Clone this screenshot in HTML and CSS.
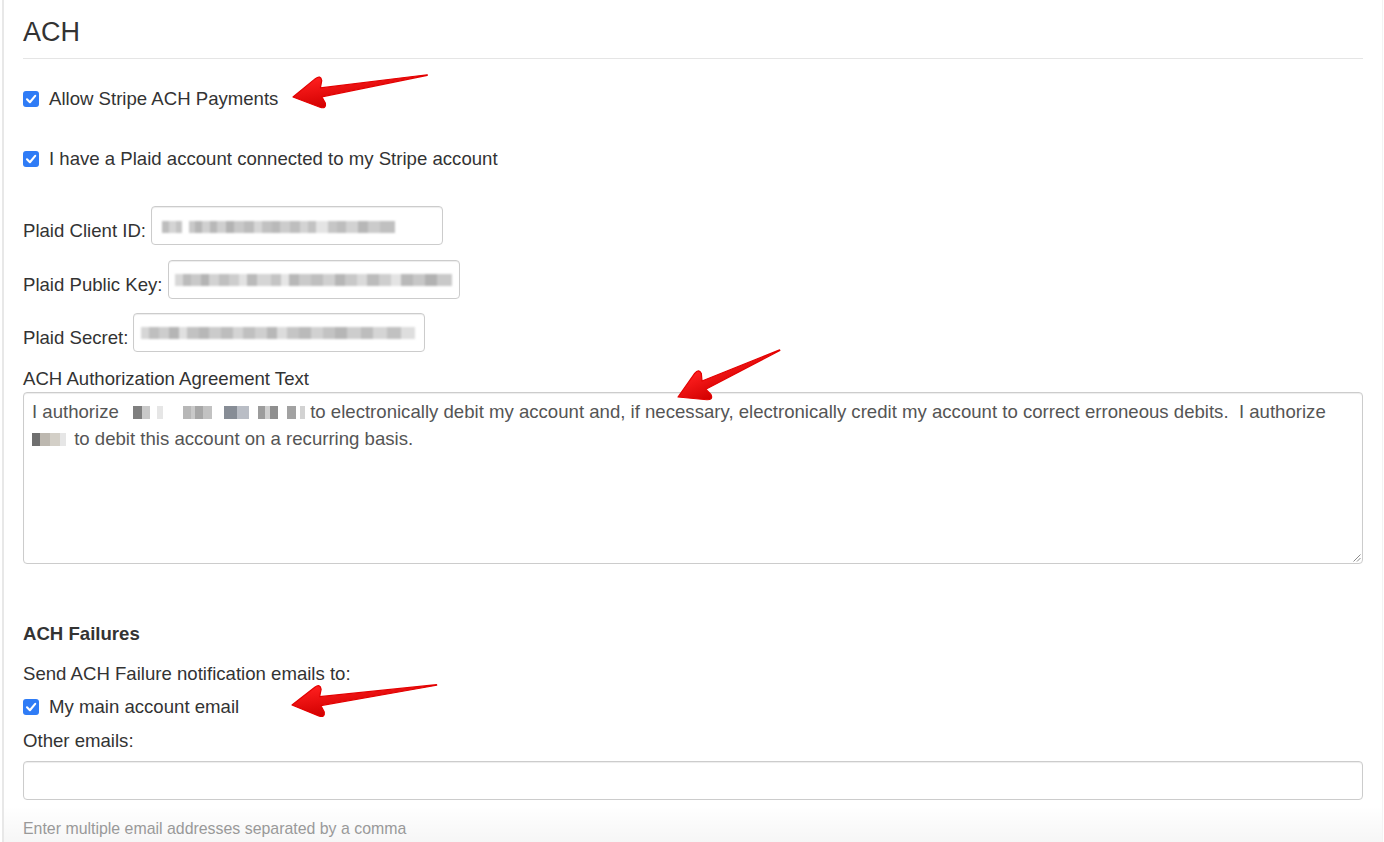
FILE: index.html
```html
<!DOCTYPE html>
<html lang="en">
<head>
<meta charset="utf-8">
<title>ACH</title>
<link rel="stylesheet" href="styles.css">
</head>
<body>
<div class="page">
  <h3 class="title">ACH</h3>

  <label class="check check-allow">
    <span class="cb"><svg viewBox="0 0 16 16" width="16" height="16"><path d="M4 8.3 L6.9 11.2 L12.2 4.9" fill="none" stroke="#fff" stroke-width="2.1" stroke-linecap="round" stroke-linejoin="round"/></svg></span>
    Allow Stripe ACH Payments
  </label>

  <label class="check check-plaid">
    <span class="cb"><svg viewBox="0 0 16 16" width="16" height="16"><path d="M4 8.3 L6.9 11.2 L12.2 4.9" fill="none" stroke="#fff" stroke-width="2.1" stroke-linecap="round" stroke-linejoin="round"/></svg></span>
    I have a Plaid account connected to my Stripe account
  </label>

  <div class="field-row field-first">
    <label class="field-label">Plaid Client ID:</label>
    <div class="input input-key input-client"><span class="mosaic mosaic-client"></span></div>
  </div>
  <div class="field-row">
    <label class="field-label">Plaid Public Key:</label>
    <div class="input input-key input-public"><span class="mosaic mosaic-public"></span></div>
  </div>
  <div class="field-row field-last">
    <label class="field-label">Plaid Secret:</label>
    <div class="input input-key input-secret"><span class="mosaic mosaic-secret"></span></div>
  </div>

  <div class="block-label">ACH Authorization Agreement Text</div>
  <div class="textarea">
    <div class="ta-line">I authorize <span class="mosaic mosaic-name"></span> to electronically debit my account and, if necessary, electronically credit my account to correct erroneous debits.&nbsp; I authorize</div>
    <div class="ta-line"><span class="mosaic mosaic-short"></span> to debit this account on a recurring basis.</div>
    <svg class="grip" viewBox="0 0 10 10" width="10" height="10"><path d="M9.5 2.5 L2.5 9.5 M9.5 6 L6 9.5" stroke="#8a8a8a" stroke-width="1" fill="none"/></svg>
  </div>

  <div class="section-title">ACH Failures</div>
  <div class="line send-line">Send ACH Failure notification emails to:</div>
  <label class="check check-main">
    <span class="cb"><svg viewBox="0 0 16 16" width="16" height="16"><path d="M4 8.3 L6.9 11.2 L12.2 4.9" fill="none" stroke="#fff" stroke-width="2.1" stroke-linecap="round" stroke-linejoin="round"/></svg></span>
    My main account email
  </label>
  <div class="line other-line">Other emails:</div>
  <div class="input input-wide"></div>
  <div class="help">Enter multiple email addresses separated by a comma</div>
</div>

<svg class="annotations" width="1384" height="842" viewBox="0 0 1384 842">
  <defs>
    <linearGradient id="redfill" x1="0" y1="0" x2="0" y2="1">
      <stop offset="0" stop-color="#ff1f1f"/>
      <stop offset="1" stop-color="#d10000"/>
    </linearGradient>
  </defs>
  <g transform="translate(293 97) rotate(-9.3)">
    <path class="arrow" d="M0 0 L25 -14.5 Q31 -17.5 31 -11.5 L28.5 -4.5 L136 -0.3 L136 0.3 L28.5 4.5 L31 11.5 Q31 17.5 25 14.5 Z"/>
  </g>
  <g transform="translate(678 397) rotate(-24.7)">
    <path class="arrow" d="M0 0 L25 -14.5 Q31 -17.5 31 -11.5 L28.5 -4.5 L112 -0.3 L112 0.3 L28.5 4.5 L31 11.5 Q31 17.5 25 14.5 Z"/>
  </g>
  <g transform="translate(292 705) rotate(-7.9)">
    <path class="arrow" d="M0 0 L25 -14.5 Q31 -17.5 31 -11.5 L28.5 -4.5 L146 -0.3 L146 0.3 L28.5 4.5 L31 11.5 Q31 17.5 25 14.5 Z"/>
  </g>
</svg>
</body>
</html>
```

FILE: styles.css
```css
html, body {
  margin: 0;
  padding: 0;
}

body {
  position: relative;
  width: 1384px;
  height: 842px;
  overflow: hidden;
  background: #fff;
  font-family: "Liberation Sans", Arial, Helvetica, sans-serif;
  font-size: 18.6px;
  color: #333;
}

.page {
  box-sizing: border-box;
  height: 842px;
  margin: 0 1px 0 2px;
  padding: 17px 19px 0 19px;
  border-left: 2px solid #e8e8e8;
  border-right: 1px solid #f3f3f3;
  background: linear-gradient(to bottom, rgba(0, 0, 0, 0) 806px, rgba(0, 0, 0, 0.035) 842px);
}

.title {
  margin: 0;
  font-size: 27px;
  font-weight: normal;
  line-height: 30px;
  padding-bottom: 11px;
  border-bottom: 1px solid #e5e5e5;
  color: #333;
}

.check {
  display: flex;
  align-items: center;
  line-height: 22px;
  height: 22px;
}

.cb {
  flex: none;
  display: flex;
  width: 16px;
  height: 16px;
  border-radius: 3px;
  background: #2f7cf6;
  margin-right: 10px;
}

.cb svg {
  flex: none;
  width: 16px;
  height: 16px;
}

.check-allow { margin-top: 29px; }
.check-plaid { margin-top: 38px; }

.field-row {
  display: flex;
  align-items: flex-end;
  margin-top: 15px;
}

.field-first { margin-top: 36px; }
.field-last { margin-top: 14px; }

.field-label {
  line-height: 22px;
  padding-bottom: 3px;
  margin-right: 5px;
}

.input {
  box-sizing: border-box;
  height: 39px;
  border: 1px solid #ccc;
  border-radius: 4px;
  box-shadow: inset 0 1px 1px rgba(0, 0, 0, 0.075);
  background: #fff;
}

.input-key {
  display: flex;
  align-items: center;
  width: 292px;
}

.input-client { padding-left: 10px; }
.input-public { padding-left: 6px; }
.input-secret { padding-left: 7px; }

.mosaic {
  display: inline-block;
  height: 12px;
  filter: blur(0.8px);
}

.mosaic-client {
  width: 233px;
  margin-top: 2px;
  background:
    linear-gradient(90deg, #bdbdbd 0 7px, #d4d4d4 7px 14px, #c4c4c4 14px 20px, transparent 20px 27px,
      #c9c9c9 27px 33px, #b6b6b6 33px 40px, #d0d0d0 40px 48px, #b8b8b8 48px 55px, #cfcfcf 55px 64px,
      #b3b3b3 64px 72px, #c8c8c8 72px 82px, #bcbcbc 82px 92px, #d6d6d6 92px 100px, #c1c1c1 100px 110px,
      #b9b9b9 110px 118px, #cccccc 118px 128px, #bebebe 128px 138px, #d3d3d3 138px 146px, #c2c2c2 146px 154px,
      #e4e4e4 154px 166px, #c6c6c6 166px 175px, #bdbdbd 175px 184px, #d2d2d2 184px 196px, #b7b7b7 196px 206px,
      #cbcbcb 206px 218px, #c0c0c0 218px 233px);
}

.mosaic-public {
  width: 277px;
  background:
    linear-gradient(90deg, #d8d8d8 0 8px, #bcbcbc 8px 16px, #c9c9c9 16px 26px, #b4b4b4 26px 34px,
      #d2d2d2 34px 44px, #c0c0c0 44px 54px, #cdcdcd 54px 64px, #e2e2e2 64px 72px, #bababa 72px 82px,
      #d5d5d5 82px 96px, #c4c4c4 96px 106px, #e6e6e6 106px 114px, #b8b8b8 114px 124px, #cacaca 124px 136px,
      #bfbfbf 136px 148px, #d0d0d0 148px 160px, #b6b6b6 160px 170px, #c8c8c8 170px 182px, #dadada 182px 192px,
      #bcbcbc 192px 204px, #cecece 204px 216px, #e4e4e4 216px 226px, #b9b9b9 226px 238px, #c7c7c7 238px 250px,
      #b2b2b2 250px 262px, #c9c9c9 262px 277px);
}

.mosaic-secret {
  width: 274px;
  background:
    linear-gradient(90deg, #d6d6d6 0 8px, #bfbfbf 8px 18px, #cdcdcd 18px 28px, #b5b5b5 28px 38px,
      #e0e0e0 38px 46px, #c2c2c2 46px 58px, #b7b7b7 58px 68px, #cbcbcb 68px 80px, #bdbdbd 80px 92px,
      #d4d4d4 92px 102px, #c0c0c0 102px 114px, #cfcfcf 114px 126px, #b8b8b8 126px 136px, #dcdcdc 136px 146px,
      #c5c5c5 146px 158px, #bababa 158px 170px, #d1d1d1 170px 182px, #c3c3c3 182px 194px, #b6b6b6 194px 206px,
      #cdcdcd 206px 220px, #bdbdbd 220px 232px, #d5d5d5 232px 246px, #c1c1c1 246px 260px, #dedede 260px 274px);
}

.block-label {
  margin-top: 16px;
  line-height: 22px;
}

.textarea {
  position: relative;
  box-sizing: border-box;
  margin-top: 2px;
  height: 172px;
  padding: 5px 8px;
  border: 1px solid #ccc;
  border-radius: 4px;
  box-shadow: inset 0 1px 1px rgba(0, 0, 0, 0.075);
  color: #555;
  line-height: 27px;
}

.ta-line {
  white-space: nowrap;
}

.mosaic-name {
  width: 181px;
  height: 13px;
  vertical-align: -1px;
  filter: none;
  background:
    linear-gradient(90deg, transparent 0 9px, #7f7f7f 9px 18px, #c9c9c9 18px 26px, transparent 26px 33px,
      #e6e6e6 33px 39px, transparent 39px 59px, #b7b7b7 59px 67px, #c9c9c9 67px 71px, #a7a7a7 71px 79px,
      #c2c2c2 79px 88px, transparent 88px 100px, #878d96 100px 113px, #b9bdc5 113px 125px, transparent 125px 134px,
      #9c9c9c 134px 141px, #cfcfcf 141px 146px, #8f8f8f 146px 154px, transparent 154px 163px,
      #a2a2a2 163px 172px, transparent 172px 176px, #d2d2d2 176px 181px);
}

.mosaic-short {
  width: 37px;
  height: 13px;
  vertical-align: -1px;
  filter: none;
  background: linear-gradient(90deg, #6f6f6f 0 8px, #bdb8b0 8px 18px, #d3cfc7 18px 28px, #e6e6e6 28px 34px, transparent 34px 37px);
}

.grip {
  position: absolute;
  right: 1px;
  bottom: 1px;
}

.section-title {
  margin-top: 59px;
  line-height: 22px;
  font-weight: bold;
}

.line {
  line-height: 22px;
}

.send-line { margin-top: 18px; }
.check-main { margin-top: 11px; }
.other-line { margin-top: 12px; }

.input-wide {
  margin-top: 9px;
  width: 100%;
}

.help {
  margin-top: 20px;
  font-size: 15.9px;
  line-height: 18px;
  color: #999;
}

.annotations {
  position: absolute;
  top: 0;
  left: 0;
  pointer-events: none;
}

.arrow {
  fill: url(#redfill);
  stroke: #e30000;
  stroke-width: 1.2;
  stroke-linejoin: round;
}
```
